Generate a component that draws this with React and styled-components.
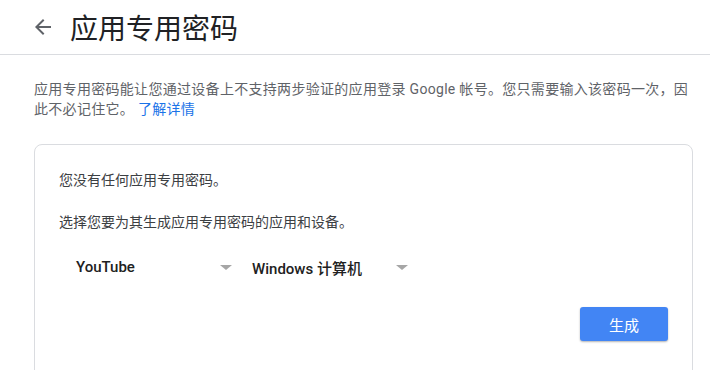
import React from "react";
import styled, { createGlobalStyle } from "styled-components";

const GlobalStyle = createGlobalStyle`
  body {
    margin: 0;
    background: #ffffff;
    font-family: Roboto, "Noto Sans CJK SC", sans-serif;
  }
`;

const Page = styled.div`
  width: 710px;
  height: 370px;
  overflow: hidden;
`;

const TopBar = styled.div`
  display: flex;
  align-items: center;
  height: 54px;
  padding-left: 31px;
  border-bottom: 1px solid #dadce0;
`;

const BackButton = styled.button`
  display: flex;
  align-items: center;
  justify-content: center;
  width: 24px;
  height: 24px;
  padding: 0;
  margin-right: 15px;
  background: none;
  border: none;
  cursor: pointer;
`;

const Title = styled.h1`
  margin: 0;
  font-family: "Noto Sans CJK SC", sans-serif;
  font-size: 28px;
  font-weight: 400;
  line-height: 36px;
  color: #202124;
`;

const Intro = styled.p`
  margin: 24px 0 0;
  padding: 0 20px 0 34px;
  font-size: 14px;
  letter-spacing: 0.3px;
  line-height: 20px;
  color: #5f6368;
`;

const Link = styled.a`
  color: #1a73e8;
  text-decoration: none;
`;

const Card = styled.div`
  margin: 25px 17px 0 34px;
  padding: 25px 24px 24px;
  border: 1px solid #dadce0;
  border-radius: 8px;
  min-height: 240px;
`;

const Note = styled.p`
  margin: 0 0 ${(p) => p.$gap || 0}px;
  font-size: 14px;
  line-height: 20px;
  color: #3c4043;
`;

const Selects = styled.div`
  display: flex;
  gap: 20px;
  padding-left: 17px;
`;

const Select = styled.div`
  display: flex;
  align-items: center;
  justify-content: space-between;
  width: 156px;
  height: 36px;
  font-family: Roboto, "Noto Sans CJK SC", sans-serif;
  font-size: 15px;
  font-weight: 500;
  color: #212121;
  cursor: pointer;
`;

const Caret = styled.span`
  width: 0;
  height: 0;
  margin-top: 1px;
  border-left: 6.5px solid transparent;
  border-right: 6.5px solid transparent;
  border-top: 5px solid #a6a6a6;
`;

const Actions = styled.div`
  display: flex;
  justify-content: flex-end;
  margin-top: 22px;
`;

const Btn = styled.button`
  width: 88px;
  height: 34px;
  border: none;
  border-radius: 3px;
  background: #4285f4;
  color: #ffffff;
  font-family: "Noto Sans CJK SC", sans-serif;
  font-size: 15px;
  box-shadow: 0 1px 2px rgba(0, 0, 0, 0.3);
  cursor: pointer;
`;

const App = () => {
  return (
    <Page>
      <GlobalStyle />
      <TopBar>
        <BackButton aria-label="返回">
          <svg width="24" height="24" viewBox="0 0 24 24">
            <path
              d="M20 11H7.83l5.59-5.59L12 4l-8 8 8 8 1.41-1.41L7.83 13H20v-2z"
              fill="#5f6368"
            />
          </svg>
        </BackButton>
        <Title>应用专用密码</Title>
      </TopBar>

      <Intro>
        应用专用密码能让您通过设备上不支持两步验证的应用登录 Google 帐号。您只需要输入该密码一次，因此不必记住它。{" "}
        <Link href="#">了解详情</Link>
      </Intro>

      <Card>
        <Note $gap={22}>您没有任何应用专用密码。</Note>
        <Note $gap={17}>选择您要为其生成应用专用密码的应用和设备。</Note>
        <Selects>
          <Select>
            YouTube
            <Caret />
          </Select>
          <Select>
            Windows 计算机
            <Caret />
          </Select>
        </Selects>
        <Actions>
          <Btn>生成</Btn>
        </Actions>
      </Card>
    </Page>
  );
};

export default App;
